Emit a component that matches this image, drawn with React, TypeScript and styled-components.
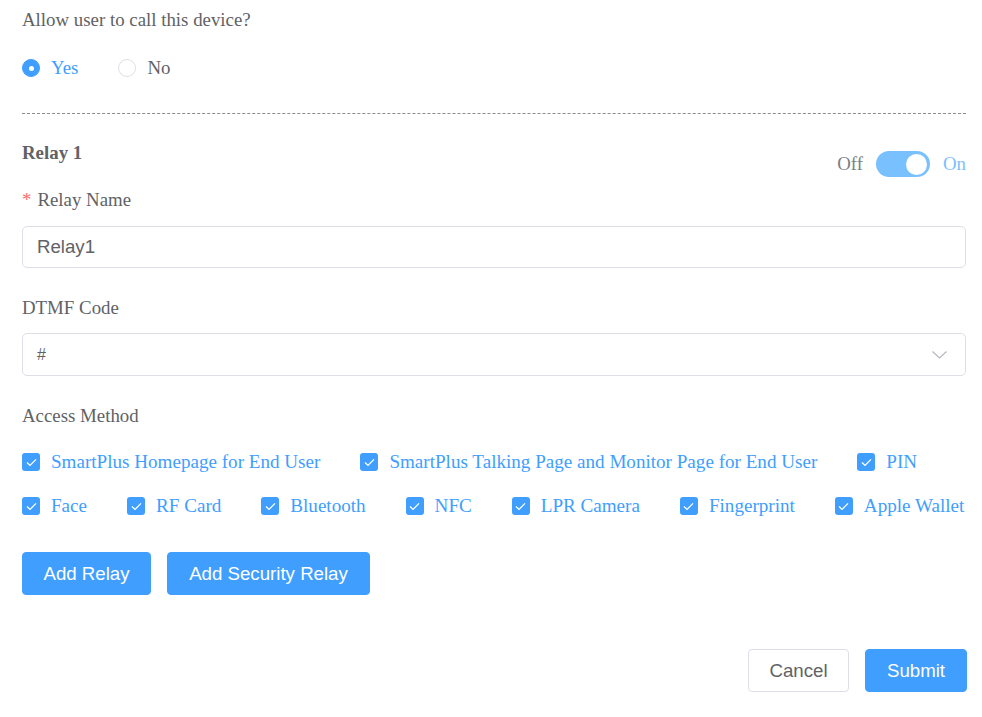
import React, { useState } from "react";
import styled, { createGlobalStyle } from "styled-components";

const GlobalStyle = createGlobalStyle`
  html, body {
    margin: 0;
    padding: 0;
    background: #ffffff;
  }
  body {
    font-family: "Liberation Serif", "Times New Roman", serif;
    font-size: 18.85px;
    color: #606266;
  }
  * { box-sizing: border-box; }
`;

const BLUE = "#409eff";
const TEXT = "#606266";
const BORDER = "#dcdfe6";
const SANS = `"Liberation Sans", Arial, sans-serif`;

const Page = styled.div`
  width: 982px;
  padding: 6px 16px 0 22px;
`;

const Question = styled.div`
  line-height: 28px;
  height: 28px;
  color: ${TEXT};
`;

const RadioGroup = styled.div`
  display: flex;
  align-items: center;
  gap: 40px;
  margin-top: 20px;
  height: 28px;
`;

const RadioItem = styled.label<{ $checked: boolean }>`
  display: flex;
  align-items: center;
  gap: 11px;
  cursor: pointer;
  color: ${(p) => (p.$checked ? BLUE : TEXT)};
`;

const RadioCircle = styled.span<{ $checked: boolean }>`
  width: 18px;
  height: 18px;
  border-radius: 50%;
  border: 1px solid ${(p) => (p.$checked ? BLUE : BORDER)};
  background: ${(p) => (p.$checked ? BLUE : "#fff")};
  display: flex;
  align-items: center;
  justify-content: center;
  &::after {
    content: "";
    width: 5px;
    height: 5px;
    border-radius: 50%;
    background: #fff;
    display: ${(p) => (p.$checked ? "block" : "none")};
  }
`;

const Divider = styled.div`
  margin-top: 31px;
  border-top: 1px dashed #8c8c8c;
  width: 944px;
`;

const RelayHeader = styled.div`
  display: flex;
  justify-content: space-between;
  align-items: flex-start;
  margin-top: 27px;
  width: 944px;
`;

const RelayTitle = styled.div`
  font-weight: bold;
  color: ${TEXT};
  line-height: 24px;
`;

const SwitchWrap = styled.div`
  display: flex;
  align-items: center;
  gap: 13px;
  margin-top: 10px;
`;

const SwitchLabel = styled.span<{ $active: boolean }>`
  color: ${(p) => (p.$active ? "#7cbfff" : "#7d7f84")};
  line-height: 26px;
`;

const SwitchTrack = styled.button<{ $on: boolean }>`
  width: 54px;
  height: 26px;
  border-radius: 13px;
  border: none;
  padding: 0 3px;
  background: ${(p) => (p.$on ? "#79c0ff" : "#dcdfe6")};
  display: flex;
  align-items: center;
  justify-content: ${(p) => (p.$on ? "flex-end" : "flex-start")};
  cursor: pointer;
`;

const SwitchKnob = styled.span`
  width: 21px;
  height: 21px;
  border-radius: 50%;
  background: #fff;
`;

const Field = styled.div<{ $top: number }>`
  margin-top: ${(p) => p.$top}px;
  width: 944px;
`;

const Label = styled.div<{ $gap?: number }>`
  line-height: 24px;
  color: ${TEXT};
  margin-bottom: ${(p) => p.$gap ?? 14}px;
`;

const Required = styled.span`
  color: #f56c6c;
  margin-right: 6px;
`;

const TextInput = styled.input`
  width: 100%;
  height: 42px;
  border: 1px solid ${BORDER};
  border-radius: 5px;
  padding: 0 14px;
  font-family: ${SANS};
  font-size: 18.67px;
  color: ${TEXT};
  outline: none;
  background: #fff;
`;

const SelectBox = styled.div`
  width: 100%;
  height: 43px;
  border: 1px solid ${BORDER};
  border-radius: 5px;
  padding: 0 18px 0 14px;
  display: flex;
  align-items: center;
  justify-content: space-between;
  font-family: ${SANS};
  font-size: 16px;
  color: ${TEXT};
  background: #fff;
`;

const CheckRows = styled.div`
  display: flex;
  flex-direction: column;
  gap: 20px;
  margin-top: 22px;
`;

const CheckRow = styled.div`
  display: flex;
  align-items: center;
  gap: 40px;
  white-space: nowrap;
`;

const CheckItem = styled.label`
  display: flex;
  align-items: center;
  gap: 11px;
  color: ${BLUE};
  font-size: 19.1px;
  line-height: 24px;
  cursor: pointer;
`;

const CheckBox = styled.span`
  width: 18px;
  height: 18px;
  border-radius: 3px;
  background: ${BLUE};
  display: flex;
  align-items: center;
  justify-content: center;
`;

const ButtonRow = styled.div<{ $top: number; $end?: boolean }>`
  display: flex;
  gap: 16px;
  margin-top: ${(p) => p.$top}px;
  width: 945px;
  justify-content: ${(p) => (p.$end ? "flex-end" : "flex-start")};
`;

const Button = styled.button<{ $primary?: boolean; $w: number }>`
  width: ${(p) => p.$w}px;
  height: 43px;
  border-radius: 4px;
  border: 1px solid ${(p) => (p.$primary ? BLUE : BORDER)};
  background: ${(p) => (p.$primary ? BLUE : "#fff")};
  color: ${(p) => (p.$primary ? "#fff" : TEXT)};
  font-family: ${SANS};
  font-size: 18.67px;
  padding: 0;
  cursor: pointer;
`;

const Check = () => (
  <CheckBox>
    <svg width="11" height="9" viewBox="0 0 11 9" fill="none">
      <path d="M1 4.6 L4 7.4 L10 1.4" stroke="#fff" strokeWidth="1.3" />
    </svg>
  </CheckBox>
);

const Chevron = () => (
  <svg width="15" height="8" viewBox="0 0 15 8" fill="none">
    <path d="M0.5 0.5 L7.5 7 L14.5 0.5" stroke="#b4b7bd" strokeWidth="1.2" />
  </svg>
);

const rowOne = [
  "SmartPlus Homepage for End User",
  "SmartPlus Talking Page and Monitor Page for End User",
  "PIN",
];
const rowTwo = [
  "Face",
  "RF Card",
  "Bluetooth",
  "NFC",
  "LPR Camera",
  "Fingerprint",
  "Apple Wallet",
];

export default function App() {
  const [allow, setAllow] = useState(true);
  const [relayOn, setRelayOn] = useState(true);

  return (
    <Page>
      <GlobalStyle />
      <Question>Allow user to call this device?</Question>
      <RadioGroup>
        <RadioItem $checked={allow} onClick={() => setAllow(true)}>
          <RadioCircle $checked={allow} />
          Yes
        </RadioItem>
        <RadioItem $checked={!allow} onClick={() => setAllow(false)}>
          <RadioCircle $checked={!allow} />
          No
        </RadioItem>
      </RadioGroup>

      <Divider />

      <RelayHeader>
        <RelayTitle>Relay 1</RelayTitle>
        <SwitchWrap>
          <SwitchLabel $active={!relayOn}>Off</SwitchLabel>
          <SwitchTrack $on={relayOn} onClick={() => setRelayOn(!relayOn)}>
            <SwitchKnob />
          </SwitchTrack>
          <SwitchLabel $active={relayOn}>On</SwitchLabel>
        </SwitchWrap>
      </RelayHeader>

      <Field $top={11}>
        <Label>
          <Required>*</Required>Relay Name
        </Label>
        <TextInput defaultValue="Relay1" />
      </Field>

      <Field $top={28}>
        <Label $gap={13}>DTMF Code</Label>
        <SelectBox>
          <span>#</span>
          <Chevron />
        </SelectBox>
      </Field>

      <Field $top={28}>
        <Label $gap={0}>Access Method</Label>
        <CheckRows>
          <CheckRow>
            {rowOne.map((t) => (
              <CheckItem key={t}>
                <Check />
                {t}
              </CheckItem>
            ))}
          </CheckRow>
          <CheckRow>
            {rowTwo.map((t) => (
              <CheckItem key={t}>
                <Check />
                {t}
              </CheckItem>
            ))}
          </CheckRow>
        </CheckRows>
      </Field>

      <ButtonRow $top={34}>
        <Button $primary $w={129}>Add Relay</Button>
        <Button $primary $w={203}>Add Security Relay</Button>
      </ButtonRow>

      <ButtonRow $top={54} $end>
        <Button $w={101}>Cancel</Button>
        <Button $primary $w={102}>Submit</Button>
      </ButtonRow>
    </Page>
  );
}
